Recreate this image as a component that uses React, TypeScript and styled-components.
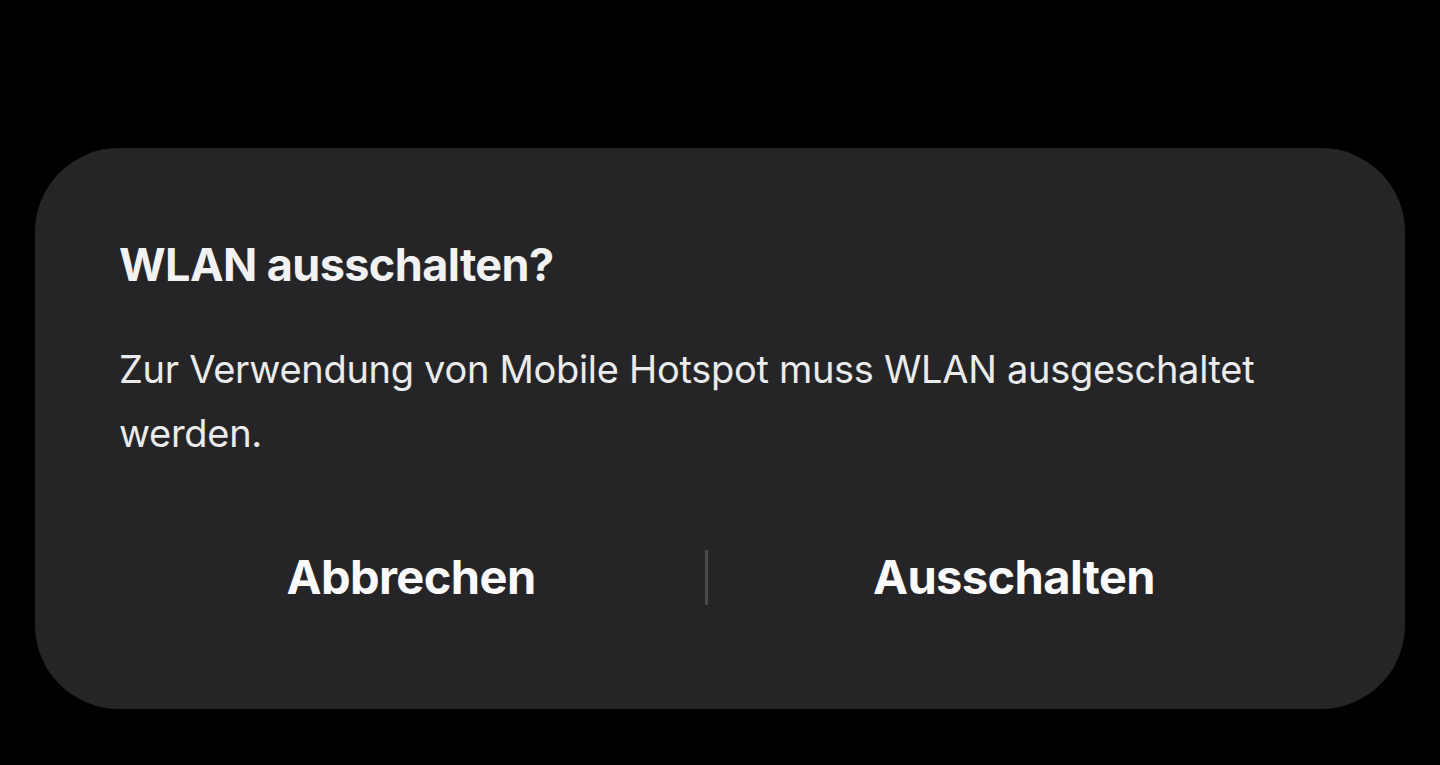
import React from "react";
import styled, { createGlobalStyle } from "styled-components";

const GlobalStyle = createGlobalStyle`
  html, body {
    margin: 0;
    padding: 0;
    background: #000000;
  }
  body {
    font-family: Inter, "Noto Sans", "Liberation Sans", sans-serif;
    -webkit-font-smoothing: antialiased;
  }
`;

const Screen = styled.div`
  width: 1440px;
  height: 765px;
  background: #000000;
  padding: 148px 35px 0 35px;
  box-sizing: border-box;
`;

const DialogCard = styled.div`
  width: 1370px;
  height: 561px;
  box-sizing: border-box;
  background: #252528;
  border-radius: 84px;
  padding: 88px 85px 0 84px;
  display: flex;
  flex-direction: column;
`;

const Title = styled.h2`
  margin: 0;
  font-size: 45px;
  line-height: 58px;
  font-weight: 700;
  color: #f2f2f2;
  letter-spacing: -0.6px;
`;

const Message = styled.p`
  margin: 43px 0 0 0;
  font-size: 38px;
  line-height: 64px;
  font-weight: 400;
  color: #ebebeb;
  max-width: 1180px;
  letter-spacing: -0.3px;
`;

const ActionRow = styled.div`
  margin: 82px 0 0 -2px;
  display: grid;
  grid-template-columns: 588px 3px 612px;
  align-items: center;
`;

const ActionButton = styled.button`
  background: none;
  border: none;
  padding: 0;
  font-family: inherit;
  font-size: 47px;
  line-height: 60px;
  font-weight: 700;
  color: #fafafa;
  text-align: center;
  letter-spacing: -0.6px;
  cursor: pointer;
`;

const Divider = styled.div`
  width: 3px;
  height: 55px;
  background: #4b4b4e;
  border-radius: 1px;
`;

const App: React.FC = () => {
  return (
    <>
      <GlobalStyle />
      <Screen>
        <DialogCard>
          <Title>WLAN ausschalten?</Title>
          <Message>
            Zur Verwendung von Mobile Hotspot muss WLAN ausgeschaltet werden.
          </Message>
          <ActionRow>
            <ActionButton>Abbrechen</ActionButton>
            <Divider />
            <ActionButton>Ausschalten</ActionButton>
          </ActionRow>
        </DialogCard>
      </Screen>
    </>
  );
};

export default App;
